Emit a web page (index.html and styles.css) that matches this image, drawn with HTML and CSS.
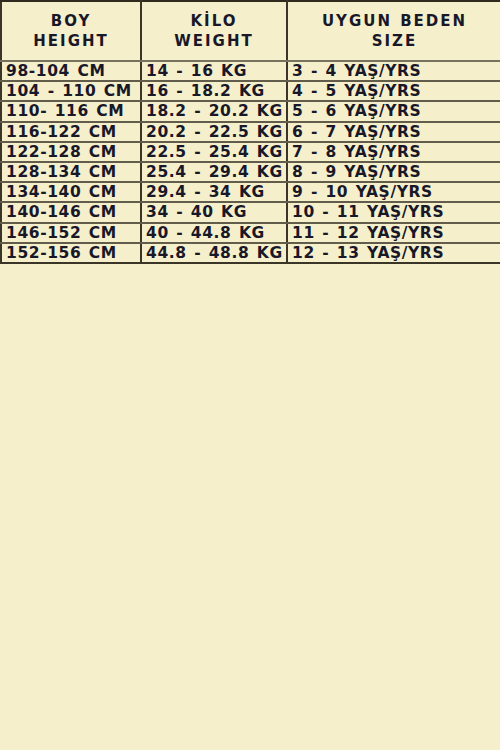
FILE: index.html
```html
<!DOCTYPE html>
<html lang="tr">
<head>
  <meta charset="UTF-8">
  <title>Beden Tablosu</title>
  <meta name="viewport" content="width=device-width, initial-scale=1.0">
  <link rel="stylesheet" href="styles.css">
</head>
<body>
  <table class="size-table">
    <colgroup>
      <col class="c1">
      <col class="c2">
      <col class="c3">
    </colgroup>
    <thead>
      <tr>
        <th>BOY<br>HEIGHT</th>
        <th>KİLO<br>WEIGHT</th>
        <th>UYGUN BEDEN<br>SIZE</th>
      </tr>
    </thead>
    <tbody>
      <tr><td>98-104 CM</td><td>14 - 16 KG</td><td>3 - 4 YAŞ/YRS</td></tr>
      <tr><td>104 - 110 CM</td><td>16 - 18.2 KG</td><td>4 - 5 YAŞ/YRS</td></tr>
      <tr><td>110- 116 CM</td><td>18.2 - 20.2 KG</td><td>5 - 6 YAŞ/YRS</td></tr>
      <tr><td>116-122 CM</td><td>20.2 - 22.5 KG</td><td>6 - 7 YAŞ/YRS</td></tr>
      <tr><td>122-128 CM</td><td>22.5 - 25.4 KG</td><td>7 - 8 YAŞ/YRS</td></tr>
      <tr><td>128-134 CM</td><td>25.4 - 29.4 KG</td><td>8 - 9 YAŞ/YRS</td></tr>
      <tr><td>134-140 CM</td><td>29.4 - 34 KG</td><td>9 - 10 YAŞ/YRS</td></tr>
      <tr><td>140-146 CM</td><td>34 - 40 KG</td><td>10 - 11 YAŞ/YRS</td></tr>
      <tr><td>146-152 CM</td><td>40 - 44.8 KG</td><td>11 - 12 YAŞ/YRS</td></tr>
      <tr><td>152-156 CM</td><td>44.8 - 48.8 KG</td><td>12 - 13 YAŞ/YRS</td></tr>
    </tbody>
  </table>
</body>
</html>
```

FILE: styles.css
```css
* { box-sizing: border-box; }
html, body {
  margin: 0;
  height: 100%;
  overflow: hidden;
}
body {
  background: #f6efcc;
  color: #181828;
  font-family: "DejaVu Sans", Verdana, sans-serif;
  font-weight: bold;
  font-size: 15.5px;
}
.size-table {
  border-collapse: collapse;
  table-layout: fixed;
  width: 500px;
  border-top: 2px solid #2f2a1d;
  border-left: 2px solid #3a3526;
}
.c1 { width: 140px; }
.c2 { width: 146px; }
.c3 { width: 214px; }
.size-table th {
  height: 60px;
  padding: 0;
  font-weight: bold;
  font-size: 15px;
  line-height: 20px;
  letter-spacing: 2px;
  word-spacing: 1px;
  text-align: center;
  border-bottom: 2px solid #77725e;
  border-right: 2px solid #3a3526;
}
.size-table td {
  height: 20.2px;
  padding: 0 2px 0 4px;
  line-height: 18px;
  letter-spacing: 0.6px;
  word-spacing: 1.5px;
  white-space: nowrap;
  overflow: hidden;
  border-bottom: 2px solid #625d4a;
  border-right: 2px solid #3a3526;
}
.size-table th:last-child,
.size-table td:last-child {
  border-right: none;
}
.size-table tbody tr:last-child td {
  border-bottom-color: #3a3526;
}
```
